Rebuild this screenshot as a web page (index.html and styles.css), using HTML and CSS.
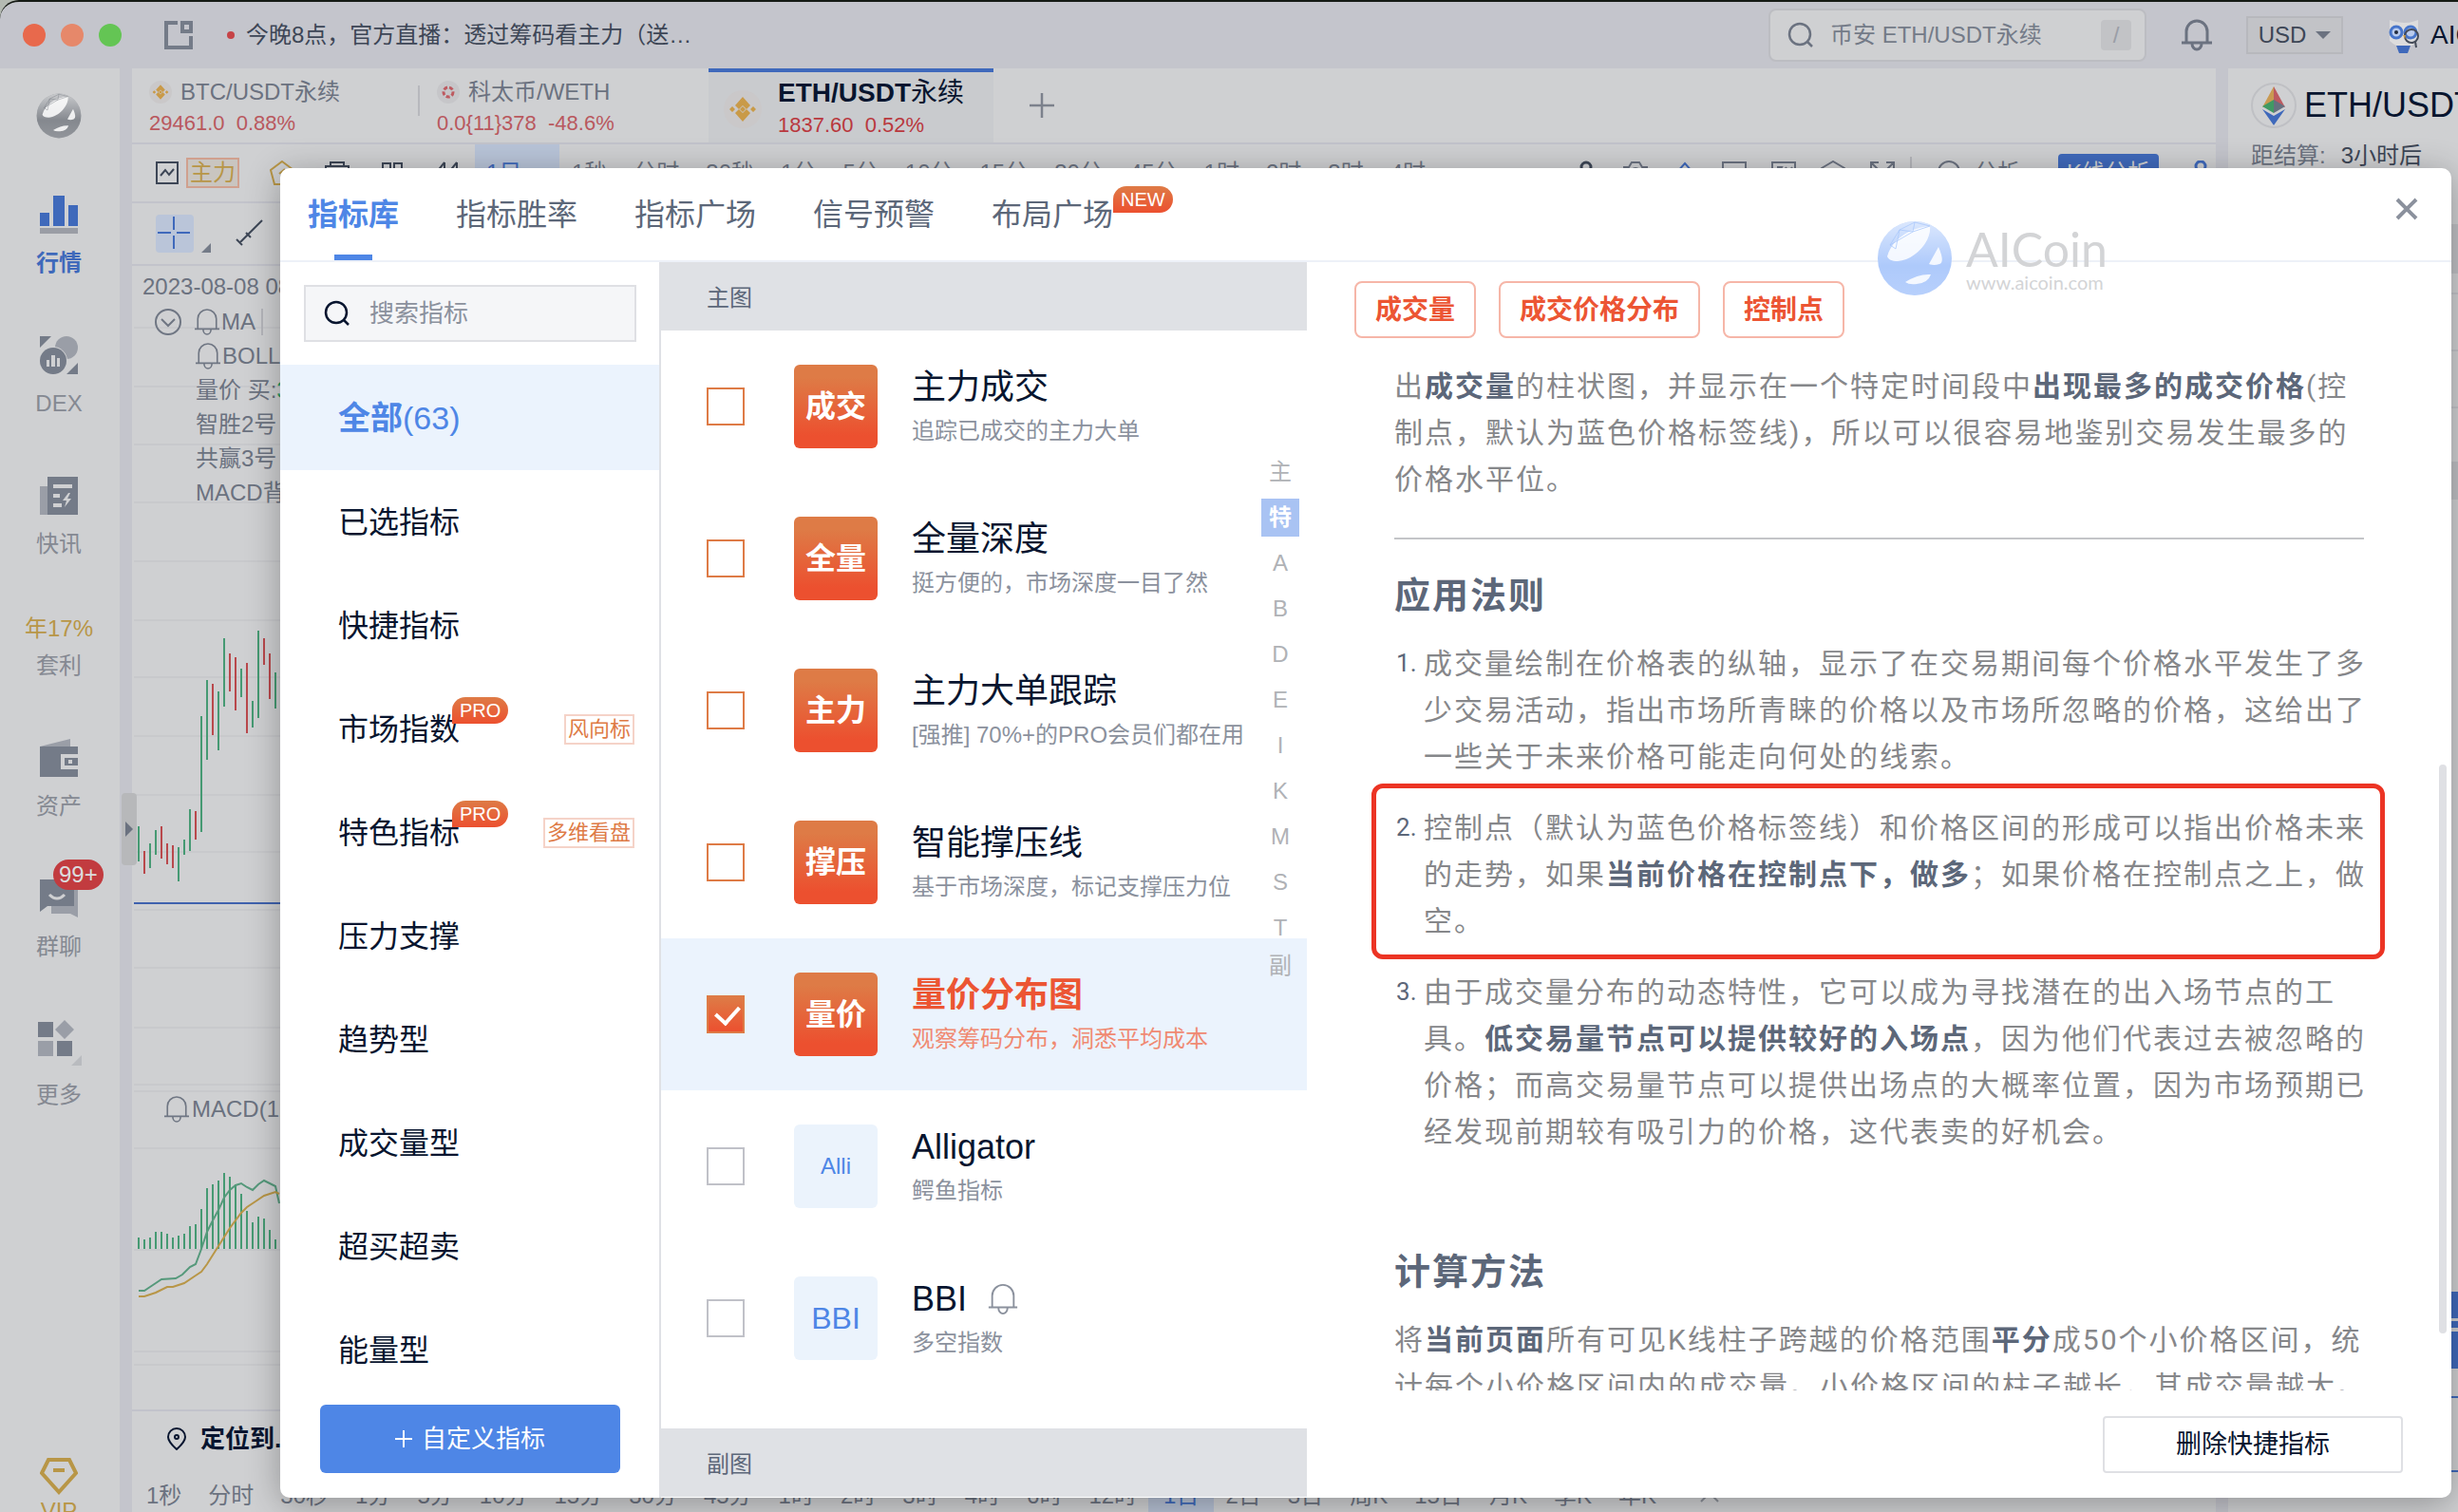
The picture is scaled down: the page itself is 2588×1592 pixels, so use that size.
FILE: index.html
```html
<!DOCTYPE html>
<html lang="zh-CN">
<head>
<meta charset="utf-8">
<title>AICoin 指标库</title>
<link rel="stylesheet" href="styles.css">
</head>
<body>
<svg class="defs" aria-hidden="true">
  <symbol id="bell" viewBox="0 0 32 36"><path d="M5 25V14a11 11 0 0 1 22 0v11M0 26h32M11 27a5 6 0 0 0 10 0" fill="none" stroke="currentColor" stroke-width="3"/></symbol>
  <symbol id="bell-thin" viewBox="0 0 32 36"><path d="M4 26V14a12 12 0 0 1 24 0v12M0 27h32M11 28a5 6 0 0 0 10 0" fill="none" stroke="currentColor" stroke-width="2"/></symbol>
  <symbol id="search" viewBox="0 0 28 28"><path d="M13 2a11 11 0 1 0 0 22a11 11 0 1 0 0-22M21 21l5 5" fill="none" stroke="currentColor" stroke-width="2.5"/></symbol>
  <symbol id="binance" viewBox="0 0 40 40"><circle cx="20" cy="20" r="20" fill="#cac8c9"/><path d="M12 16l8-9 8 9-4 4-4-4-4 4zM12 24l8 9 8-9-4-4-4 4-4-4zM20 17l3 3-3 3-3-3zM9 17l3 3-3 3-3-3zM31 17l3 3-3 3-3-3z" fill="#c99a48"/></symbol>
  <symbol id="globe" viewBox="0 0 80 80"><circle cx="40" cy="40" r="39" fill="currentColor"/><circle cx="40" cy="40" r="39" fill="url(#globe-light)"/><path d="M11 38C16 20 34 8 56 6C58 22 40 42 22 43C16 43 12 41 11 38zM55 46L65 28Q72 44 66 46Q60 48 55 46zM30 65Q44 56 57 57Q54 66 42 67Q34 68 30 65z" fill="#fff" fill-opacity=".85"/><path d="M14 26L24 10L40 2L56 6M24 10L38 12L40 2M38 12L56 6M14 26L38 12M14 26L20 30L24 10" fill="none" stroke="currentColor" stroke-opacity=".7" stroke-width="1"/></symbol>
  <linearGradient id="globe-light" x1="0" y1="0" x2="0" y2="1"><stop offset="0" stop-color="#fff" stop-opacity=".6"/><stop offset=".6" stop-color="#fff" stop-opacity=".1"/><stop offset="1" stop-color="#fff" stop-opacity=".2"/></linearGradient>
</svg>

<div class="window">
  <header class="titlebar">
    <div class="lights"><i class="light light-red"></i><i class="light light-orange"></i><i class="light light-green"></i></div>
    <svg class="layout-icon" viewBox="0 0 30 30"><path d="M14 2H2v26h26V16M19 2h9v9h-9z" fill="none" stroke="#747b88" stroke-width="4"/></svg>
    <a class="notice" href="#"><i class="dot"></i>今晚8点，官方直播：透过筹码看主力（送…</a>
    <label class="top-search"><svg class="icon28"><use href="#search"/></svg><input type="text" placeholder="币安 ETH/USDT永续" aria-label="搜索"><kbd>/</kbd></label>
    <svg class="top-bell"><use href="#bell"/></svg>
    <button class="currency">USD<i class="caret"></i></button>
    <a class="profile" href="#"><svg class="owl" viewBox="0 0 38 40"><path d="M4 4q15 6 30 0v22q-15 14-30 0z" fill="#dcdcdd"/><circle cx="11" cy="17" r="6" fill="#b9cbed" stroke="#4675cb" stroke-width="3"/><circle cx="26" cy="17" r="6" fill="#b9cbed" stroke="#4675cb" stroke-width="3"/><circle cx="11" cy="17" r="2" fill="#222b3d"/><circle cx="27" cy="21" r="7" fill="none" stroke="#454c59" stroke-width="2"/><path d="M11 31h15l-3 8h-9z" fill="#3f69bb"/><path d="M31 27l1 6" stroke="#454c59" stroke-width="2"/><path d="M18 20l3 0-1 4z" fill="#c99a48"/></svg>AIC</a>
  </header>

  <div class="workspace">
    <nav class="sidebar">
      <svg class="brand"><use href="#globe"/></svg>
      <a class="nav-item nav-active" href="#"><svg class="icon40" viewBox="0 0 40 40"><path d="M0 18h10v14H0zM14 0h12v32H14zM30 10h10v22H30z" fill="#3f69bb"/><path d="M0 34h40v6H0z" fill="#9a9da5"/></svg>行情</a>
      <a class="nav-item" href="#"><svg class="icon40" viewBox="0 0 40 40"><circle cx="28" cy="12" r="12" fill="#9a9ea7"/><circle cx="14" cy="26" r="15" fill="#cfd0d2"/><circle cx="14" cy="26" r="14" fill="#747b88"/><path d="M0 0h12L0 12zM40 40H28l12-12z" fill="#747b88"/><path d="M7 25h3v7H7zM12 20h4v12h-4zM18 23h3v9h-3z" fill="#cfd0d2"/></svg>DEX</a>
      <a class="nav-item" href="#"><svg class="icon40" viewBox="0 0 40 40"><path d="M0 10h8v30H0z" fill="#9a9ea7"/><path d="M8 0h32v40H8z" fill="#747b88"/><path d="M14 8h20v4H14zM14 18h7v4h-7zM14 28h9v4h-9zM30 17l-6 8h4l-2 7 7-9h-4l3-6z" fill="#cfd0d2"/></svg>快讯</a>
      <a class="nav-item nav-rate" href="#"><b>年17%</b>套利</a>
      <a class="nav-item" href="#"><svg class="icon40" viewBox="0 0 40 40"><path d="M0 8L32 0v8z" fill="#9a9ea7"/><path d="M0 8h40v8H22v16h18v8H0z" fill="#747b88"/><path d="M26 20h14v8H26z" fill="#747b88"/><path d="M30 22h4v4h-4z" fill="#cfd0d2"/></svg>资产</a>
      <a class="nav-item" href="#"><svg class="icon40" viewBox="0 0 40 40"><path d="M12 8h28v32l-8-4H12z" fill="#9a9ea7"/><path d="M0 0h36v28H8l-8 6z" fill="#747b88"/><path d="M10 16q8 8 16 0" fill="none" stroke="#cfd0d2" stroke-width="3"/></svg>群聊<span class="count">99+</span></a>
      <a class="nav-item" href="#"><svg class="icon-more" viewBox="0 0 48 48"><path d="M2 2h16v16H2zM22 22h16v16H22z" fill="#747b88"/><path d="M2 22h16v16H2zM30 0l10 10-10 10-10-10z" fill="#9a9ea7"/><path d="M48 37v11H37z" fill="#b9bbbf"/></svg>更多</a>
      <a class="vip" href="#"><svg class="icon40" viewBox="0 0 40 40"><path d="M9 3h22l7 14-18 20L2 17z" fill="none" stroke="#b89647" stroke-width="4"/><path d="M14 14h12" stroke="#b89647" stroke-width="4"/></svg>VIP</a>
    </nav>

    <main class="center">
      <div class="pair-tabs">
        <a class="pair" href="#"><span class="pair-name"><svg class="icon24"><use href="#binance"/></svg>BTC/USDT永续</span><span class="price">29461.0&nbsp; 0.88%</span></a>
        <i class="pair-line"></i>
        <a class="pair" href="#"><span class="pair-name"><svg class="icon24" viewBox="0 0 24 24"><circle cx="12" cy="12" r="12" fill="#c6c6c9"/><circle cx="12" cy="12" r="5" fill="none" stroke="#bd5a60" stroke-width="3" stroke-dasharray="4 2"/></svg>科太币/WETH</span><span class="price">0.0{11}378&nbsp; -48.6%</span></a>
        <a class="pair-current" href="#"><svg class="icon40"><use href="#binance"/></svg><span><b>ETH/USDT<span class="suffix">永续</span></b><span class="price">1837.60&nbsp; 0.52%</span></span></a>
        <button class="add" aria-label="添加"><svg viewBox="0 0 26 26"><path d="M13 0v26M0 13h26" stroke="#7c818c" stroke-width="2.5"/></svg></button>
      </div>

      <div class="toolbar">
        <svg class="tool-chart" viewBox="0 0 24 24"><path d="M1 1h22v22H1zM5 15l5-6 4 5 5-6" fill="none" stroke="#3d4656" stroke-width="2"/></svg>
        <button class="main-force">主力</button>
        <div class="tool-group">
          <svg class="tool" viewBox="0 0 26 26"><path d="M13 1l12 9-4 15H5L1 10zM10 14l6-5" fill="none" stroke="#b89647" stroke-width="2"/></svg>
          <svg class="tool" viewBox="0 0 26 26"><path d="M6 6V2h14v4M1 6h24v18H1z" fill="none" stroke="#3d4656" stroke-width="2"/></svg>
          <svg class="tool" viewBox="0 0 26 26"><path d="M3 3h8v8H3zM15 3h8v8h-8zM3 15h8v8H3zM15 15h8v8h-8z" fill="none" stroke="#3d4656" stroke-width="2"/></svg>
          <svg class="tool" viewBox="0 0 26 26"><path d="M10 2v20M10 2L1 13h12M23 2v20M23 2l-9 11h12" fill="none" stroke="#3d4656" stroke-width="2"/></svg>
        </div>
        <button class="period-now">1日</button>
        <div class="periods"><span>1秒</span><span>分时</span><span>30秒</span><span>1分</span><span>5分</span><span>10分</span><span>15分</span><span>30分</span><span>45分</span><span>1时</span><span>2时</span><span>3时</span><span>4时</span></div>
        <div class="tool-right">
          <svg class="tool" viewBox="0 0 26 26"><circle cx="13" cy="7" r="5" fill="none" stroke="#3d4656" stroke-width="3"/></svg>
          <svg class="tool" viewBox="0 0 26 26"><path d="M0 7h6l3-5h8l3 5h6v16H0z" fill="none" stroke="#6b7280" stroke-width="2"/><circle cx="13" cy="13" r="5" fill="none" stroke="#6b7280" stroke-width="2"/></svg>
          <svg class="tool" viewBox="0 0 26 26"><path d="M13 3l9 10-9 10-9-10z" fill="none" stroke="#3f69bb" stroke-width="2"/></svg>
          <svg class="tool" viewBox="0 0 26 26"><path d="M1 2h24v20H1z" fill="none" stroke="#6b7280" stroke-width="2"/></svg>
          <svg class="tool" viewBox="0 0 26 26"><path d="M1 2h24v20H1zM6 7h5l-3 6M15 7l3 5 4-5" fill="none" stroke="#6b7280" stroke-width="2"/></svg>
          <svg class="tool" viewBox="0 0 26 26"><path d="M1 8l12-7 12 7v11l-12 6-12-6z" fill="none" stroke="#6b7280" stroke-width="2"/></svg>
          <svg class="tool" viewBox="0 0 26 26"><path d="M1 9V2h8M17 2h8v7M1 2l9 9M25 2l-9 9" fill="none" stroke="#6b7280" stroke-width="2"/></svg>
          <i class="bar"></i>
          <svg class="tool" viewBox="0 0 26 26"><circle cx="13" cy="12" r="11" fill="none" stroke="#6b7280" stroke-width="2"/></svg>
          <span class="analyse">分析</span>
          <button class="k-analyse">K线分析</button>
          <svg class="tool" viewBox="0 0 26 26"><circle cx="18" cy="6" r="5" fill="none" stroke="#3f69bb" stroke-width="3"/><path d="M14 10l-9 9" stroke="#3f69bb" stroke-width="3"/></svg>
        </div>
      </div>

      <div class="draw-tools">
        <button class="cross" aria-label="十字光标"><svg viewBox="0 0 40 40"><path d="M19 2v14M19 22v14M2 19h14M22 19h14" stroke="#3f69bb" stroke-width="2"/></svg></button>
        <svg class="corner" viewBox="0 0 10 10"><path d="M10 0v10H0z" fill="#747b88"/></svg>
        <svg class="trend" viewBox="0 0 30 30"><path d="M4 25L28 1M1 21l6 6M11 14l5 5" fill="none" stroke="#3d4656" stroke-width="2"/></svg>
      </div>

      <div class="chart">
        <svg class="plot" viewBox="140 280 160 1204">
          <path d="M142 345h158M142 407h158M142 468h158M142 529h158M142 591h158M142 653h158M142 713h158M142 775h158M142 837h158M142 897h158M142 958h158M142 1019h158M142 1082h158M142 1142h158M142 1149h158M142 1209h158M142 1316h158M142 1423h158M142 1437h158" stroke="#c8c9cc" stroke-width="2"/>
          <path d="M147 870v37M159 888v26M165 874v26M189 892v36M195 884v16M201 852v44M213 754v122M219 716v84M231 728v62M237 672v72M255 704v30M267 738v28M273 664v92M291 708v38" stroke="#469a73" stroke-width="2"/>
          <path d="M153 896v24M171 870v34M177 888v22M183 890v24M207 854v30M225 720v54M243 688v40M249 692v56M261 698v74M279 672v28M285 688v48" stroke="#b9484c" stroke-width="2"/>
          <path d="M142 951h158" stroke="#3f62ae" stroke-width="2"/>
          <path d="M147 1315v-12M153 1315v-10M159 1315v-12M165 1315v-18M171 1315v-18M177 1315v-16M183 1315v-12M189 1315v-14M195 1315v-16M201 1315v-24M207 1315v-26M213 1315v-42M219 1315v-64M225 1315v-68M231 1315v-72M237 1315v-80M243 1315v-76M249 1315v-68M255 1315v-58M261 1315v-40M267 1315v-28M273 1315v-34M279 1315v-32M285 1315v-20M291 1315v-10" stroke="#469a73" stroke-width="2"/>
          <path d="M147 1359h6l6-4 6-4 6-4 15-1 7-4 8-8 6-3 6-16 6-18 6-12 6-11 6-13 6-8 6-5 6-2 6 4 6 3 6-6 6-4 6 3 6 3 4 18" fill="none" stroke="#55997b" stroke-width="2"/>
          <path d="M147 1365h6l12-4 12-6h6l12-4 12-8 6-4 6-8 12-19 12-19 12-16 6-6 9-6 9-6 12-4 4 2" fill="none" stroke="#b89647" stroke-width="2"/>
        </svg>
        <div class="legend">
          <time>2023-08-08 08:00</time>
          <div class="legend-row legend-first"><svg class="icon28" viewBox="0 0 28 28"><circle cx="14" cy="14" r="13" fill="none" stroke="#6f7683" stroke-width="2"/><path d="M7 11l7 7 7-7" fill="none" stroke="#6f7683" stroke-width="2"/></svg><svg class="small-bell"><use href="#bell-thin"/></svg>MA<i class="legend-line"></i></div>
          <div class="legend-row"><svg class="small-bell"><use href="#bell-thin"/></svg>BOLL</div>
          <div class="legend-row legend-value"><span>量价 买:</span><span class="up">3</span></div>
          <div class="legend-row">智胜2号</div>
          <div class="legend-row">共赢3号</div>
          <div class="legend-row">MACD背离</div>
        </div>
        <div class="macd-label"><svg class="small-bell"><use href="#bell-thin"/></svg>MACD(12,26,9)</div>
        <button class="drawer" aria-label="展开"><svg viewBox="0 0 8 16"><path d="M0 0l8 8-8 8z" fill="#6b7280"/></svg></button>
      </div>

      <div class="locate"><svg class="pin" viewBox="0 0 20 24"><path d="M10 1a9 9 0 0 1 9 9q0 5-9 13Q1 15 1 10a9 9 0 0 1 9-9z" fill="none" stroke="#08152f" stroke-width="2"/><circle cx="10" cy="10" r="2" fill="none" stroke="#08152f" stroke-width="2"/></svg>定位到...</div>
      <div class="periods periods-bottom"><span>1秒</span><span>分时</span><span>30秒</span><span>1分</span><span>5分</span><span>10分</span><span>15分</span><span>30分</span><span>45分</span><span>1时</span><span>2时</span><span>3时</span><span>4时</span><span>6时</span><span>12时</span><span class="chosen">1日</span><span>2日</span><span>3日</span><span>周K</span><span>15日</span><span>月K</span><span>季K</span><span>年K</span><svg class="fold" viewBox="0 0 20 12"><path d="M1 11l9-9 9 9" fill="none" stroke="#8a8e97" stroke-width="2"/></svg></div>
    </main>

    <aside class="quote">
      <h1><svg class="icon48" viewBox="0 0 48 48"><circle cx="24" cy="24" r="23" fill="none" stroke="#bfc0c4" stroke-width="2"/><path d="M24 4v16L12 26z" fill="#c99a52"/><path d="M24 4v16l12 6z" fill="#bd5a60"/><path d="M24 18v14l-12-7z" fill="#3f9a63"/><path d="M24 18v14l12-7z" fill="#66707f"/><path d="M12 28l12 7 12-7-12 17z" fill="#3f69bb"/></svg>ETH/USDT</h1>
      <p class="settle">距结算:<span>3小时后</span></p>
      <svg class="quote-edge" viewBox="0 0 8 1400"><path d="M0 59h8v52H0zM0 309h8v40H0z" fill="#bfc0c4"/><path d="M0 132h8M0 192h8M0 252h8" stroke="#c2c3c8" stroke-width="2"/><path d="M0 1183h8v28H0zM0 1214h8v7H0zM0 1225h8v39H0z" fill="#3f69bb"/><path d="M0 1294h8M0 1372h8" stroke="#3f69bb" stroke-width="2"/></svg>
    </aside>
  </div>
</div>

<section class="dialog" role="dialog" aria-label="指标库">
  <header class="dialog-head">
    <button class="tab tab-on">指标库</button>
    <button class="tab">指标胜率</button>
    <button class="tab">指标广场</button>
    <button class="tab">信号预警</button>
    <button class="tab">布局广场<span class="badge badge-new">NEW</span></button>
    <button class="close" aria-label="关闭"><svg viewBox="0 0 24 24"><path d="M2 2l20 20M22 2L2 22" stroke="#8b919d" stroke-width="4"/></svg></button>
  </header>

  <div class="dialog-body">
    <div class="categories">
      <label class="find"><svg class="icon28"><use href="#search"/></svg><input type="text" placeholder="搜索指标" aria-label="搜索指标"></label>
      <ul class="category-list">
        <li class="on"><a href="#"><b>全部</b>(63)</a></li>
        <li><a href="#">已选指标</a></li>
        <li><a href="#">快捷指标</a></li>
        <li><a href="#">市场指数<span class="badge">PRO</span></a><em>风向标</em></li>
        <li><a href="#">特色指标<span class="badge">PRO</span></a><em>多维看盘</em></li>
        <li><a href="#">压力支撑</a></li>
        <li><a href="#">趋势型</a></li>
        <li><a href="#">成交量型</a></li>
        <li><a href="#">超买超卖</a></li>
        <li><a href="#">能量型</a></li>
      </ul>
      <button class="custom"><svg class="plus" viewBox="0 0 18 18"><path d="M9 0v18M0 9h18" stroke="#fff" stroke-width="2"/></svg>自定义指标</button>
    </div>

    <div class="indicators">
      <h2 class="group">主图</h2>
      <ul class="indicator-list">
        <li><label><input type="checkbox"><span class="tile">成交</span><span class="info"><strong>主力成交</strong><small>追踪已成交的主力大单</small></span></label></li>
        <li><label><input type="checkbox"><span class="tile">全量</span><span class="info"><strong>全量深度</strong><small>挺方便的，市场深度一目了然</small></span></label></li>
        <li><label><input type="checkbox"><span class="tile">主力</span><span class="info"><strong>主力大单跟踪</strong><small>[强推] 70%+的PRO会员们都在用</small></span></label></li>
        <li><label><input type="checkbox"><span class="tile">撑压</span><span class="info"><strong>智能撑压线</strong><small>基于市场深度，标记支撑压力位</small></span></label></li>
        <li class="picked"><label><input type="checkbox" checked><span class="tile">量价</span><span class="info"><strong>量价分布图</strong><small>观察筹码分布，洞悉平均成本</small></span></label></li>
        <li class="plain"><label><input type="checkbox"><span class="tile tile-small">Alli</span><span class="info"><strong>Alligator</strong><small>鳄鱼指标</small></span></label></li>
        <li class="plain"><label><input type="checkbox"><span class="tile">BBI</span><span class="info"><strong>BBI<svg class="alert"><use href="#bell-thin"/></svg></strong><small>多空指数</small></span></label></li>
      </ul>
      <h2 class="group">副图</h2>
      <nav class="letters"><a href="#">主</a><a class="here" href="#">特</a><a href="#">A</a><a href="#">B</a><a href="#">D</a><a href="#">E</a><a href="#">I</a><a href="#">K</a><a href="#">M</a><a href="#">S</a><a href="#">T</a><a class="last" href="#">副</a></nav>
    </div>

    <div class="detail">
      <div class="tags"><span>成交量</span><span>成交价格分布</span><span>控制点</span></div>
      <article class="article">
        <p>出<b>成交量</b>的柱状图，并显示在一个特定时间段中<b>出现最多的成交价格</b>(控制点，默认为蓝色价格标签线)，所以可以很容易地鉴别交易发生最多的价格水平位。</p>
        <hr>
        <h3>应用法则</h3>
        <ol>
          <li>成交量绘制在价格表的纵轴，显示了在交易期间每个价格水平发生了多少交易活动，指出市场所青睐的价格以及市场所忽略的价格，这给出了一些关于未来价格可能走向何处的线索。</li>
          <li class="marked">控制点（默认为蓝色价格标签线）和价格区间的形成可以指出价格未来的走势，如果<b>当前价格在控制点下，做多</b>；如果价格在控制点之上，做空。</li>
          <li>由于成交量分布的动态特性，它可以成为寻找潜在的出入场节点的工具。<b>低交易量节点可以提供较好的入场点</b>，因为他们代表过去被忽略的价格；而高交易量节点可以提供出场点的大概率位置，因为市场预期已经发现前期较有吸引力的价格，这代表卖的好机会。</li>
        </ol>
        <h3 class="method">计算方法</h3>
        <p>将<b>当前页面</b>所有可见K线柱子跨越的价格范围<b>平分</b>成50个小价格区间，统计每个小价格区间内的成交量。小价格区间的柱子越长，其成交量越大。</p>
      </article>
      <i class="thumb"></i>
      <footer class="actions"><button>删除快捷指标</button></footer>
    </div>
  </div>

  <div class="watermark"><svg class="watermark-globe"><use href="#globe"/></svg><div><b>AICoin</b><span>www.aicoin.com</span></div></div>
</section>
</body>
</html>
```
FILE: styles.css
```css
* { box-sizing: border-box; }
html { background: #b4bab2; }
body {
  margin: 0;
  height: 100vh;
  overflow: hidden;
  position: relative;
  font-family: "Liberation Sans", "Noto Sans CJK SC", sans-serif;
  font-size: 24px;
  line-height: 34px;
  color: #6b7280;
  white-space: nowrap;
}
a { color: inherit; text-decoration: none; }
button, input { font: inherit; color: inherit; border: 0; padding: 0; background: none; }
ul, ol { margin: 0; padding: 0; list-style: none; }
h1, h2, h3, p { margin: 0; }
svg { display: block; flex: none; }
.defs { position: absolute; width: 0; height: 0; }
.icon24 { width: 24px; height: 24px; }
.icon28 { width: 28px; height: 28px; }
.icon40 { width: 40px; height: 40px; }
.icon48 { width: 48px; height: 48px; }

/* window frame */
.window {
  height: 100%;
  display: flex;
  flex-direction: column;
  border-top: 2px solid #151a14;
  border-radius: 20px 0 0 0;
  background: #c4c5cc;
  overflow: hidden;
}
.titlebar { height: 70px; flex: none; display: flex; align-items: center; padding-left: 24px; }
.lights { display: flex; gap: 16px; }
.light { width: 24px; height: 24px; border-radius: 50%; }
.light-red { background: #e8694c; }
.light-orange { background: #e6886a; }
.light-green { background: #64c554; }
.layout-icon { width: 30px; height: 30px; margin-left: 45px; }
.notice { display: flex; align-items: center; margin-left: 36px; color: #3d4656; }
.dot { width: 8px; height: 8px; border-radius: 50%; background: #c64347; margin-right: 12px; }
.top-search {
  margin-left: auto;
  width: 398px;
  height: 56px;
  padding: 0 14px 0 18px;
  display: flex;
  align-items: center;
  border: 2px solid #bcbdc2;
  border-radius: 8px;
  background: #cfd0d2;
}
.top-search input { flex: 1; min-width: 0; margin-left: 17px; }
.top-search input::placeholder { color: #747b88; opacity: 1; }
kbd { width: 32px; height: 32px; border-radius: 4px; background: #c2c3c6; text-align: center; font: inherit; line-height: 32px; color: #9a9ea7; }
.top-bell { width: 32px; height: 36px; margin-left: 37px; color: #6b7280; }
.currency { width: 102px; height: 40px; margin-left: 36px; display: flex; align-items: center; justify-content: center; gap: 10px; background: #c2c3c7; border: 2px solid #b7b8bd; color: #3d4656; }
.caret { border: 8px solid transparent; border-top-color: #6b7280; border-bottom: 0; }
.profile { width: 121px; padding-left: 45px; display: flex; align-items: center; gap: 9px; overflow: hidden; font-size: 28px; color: #08152f; }
.owl { width: 38px; height: 40px; }

.workspace { flex: 1; min-height: 0; display: grid; grid-template-columns: 126px minmax(0, 1fr) 242px; column-gap: 13px; }

/* left navigation */
.sidebar { display: flex; flex-direction: column; align-items: center; gap: 60px; padding: 26px 2px 0 0; background: #cfd0d2; min-height: 0; }
.brand { width: 48px; height: 48px; color: #777b82; }
.nav-item { position: relative; display: flex; flex-direction: column; align-items: center; gap: 14px; color: #858992; }
.nav-active { font-weight: 700; color: #3f69bb; }
.nav-rate { gap: 10px; }
.nav-rate b { font-weight: 400; line-height: 24px; color: #b89647; }
.icon-more { width: 48px; height: 48px; }
.count { position: absolute; left: 18px; top: -21px; padding: 0 6px; border-radius: 16px; background: #c23b3f; color: #dcdcdd; line-height: 32px; }
.vip { margin-top: auto; margin-bottom: -16px; display: flex; flex-direction: column; align-items: center; color: #b89647; }

/* chart column */
.center { background: #cfd0d2; display: flex; flex-direction: column; min-height: 0; }
.pair-tabs { height: 80px; flex: none; display: flex; border-bottom: 2px solid #c2c3cb; }
.pair { width: 302px; padding: 8px 0 0 18px; line-height: 33px; }
.pair-line { width: 2px; height: 32px; margin: 18px 0 0 -1px; background: #b7b8bd; }
.pair-name { display: flex; align-items: center; gap: 9px; }
.price { display: block; font-size: 22px; color: #b9585e; }
.pair-current { width: 300px; height: 78px; margin-left: 2px; padding: 4px 16px 0; display: flex; align-items: center; gap: 17px; border-top: 4px solid #3f69bb; background: #c9cbce; }
.pair-current b { display: block; font-size: 28px; font-weight: 700; color: #08152f; }
.suffix { font-weight: 400; }
.pair-current .price { color: #b9383e; }
.add { margin-left: 38px; }
.add svg { width: 26px; height: 26px; }
.toolbar { height: 62px; flex: none; padding: 0 8px 0 25px; display: flex; align-items: center; border-bottom: 2px solid #c2c3cb; }
.tool { width: 26px; height: 26px; }
.tool-chart { width: 24px; height: 24px; }
.main-force { width: 56px; height: 32px; margin-left: 8px; border: 2px solid #d0a08e; background: #c9c5c0; line-height: 28px; color: #b89647; }
.tool-group { display: flex; gap: 32px; margin: 0 16px 0 32px; }
.period-now { width: 89px; align-self: stretch; padding-left: 12px; text-align: left; background: #b8c4d8; color: #3f69bb; }
.periods { display: flex; gap: 28px; margin-left: 13px; }
.tool-right { margin-left: auto; display: flex; align-items: center; gap: 26px; }
.bar { width: 2px; height: 34px; margin-left: -10px; background: #b4b5ba; }
.analyse { width: 62px; margin-left: -12px; }
.k-analyse { width: 106px; height: 40px; border-radius: 4px; background: #3f69bb; color: #cfd0d2; }
.draw-tools { height: 66px; flex: none; padding: 0 25px; display: flex; align-items: center; border-bottom: 2px solid #c2c3cb; }
.cross { width: 40px; height: 40px; border-radius: 4px; background: #bac5d9; }
.corner { width: 10px; height: 10px; margin: 30px 0 0 8px; }
.trend { width: 30px; height: 30px; margin-left: 26px; }
.chart { position: relative; flex: 1; min-height: 0; }
.plot { width: 160px; height: 100%; }
.legend { position: absolute; left: 11px; top: 5px; }
.legend time { display: block; }
.legend-row { height: 36px; line-height: 36px; padding-left: 56px; display: flex; align-items: center; gap: 2px; }
.legend-first { padding-left: 13px; margin-top: 2px; }
.legend-first .icon28 { margin-right: 12px; }
.legend-line { width: 2px; height: 28px; margin-left: 4px; background: #b4b5ba; }
.legend-value { gap: 0; }
.up { color: #2f9a66; }
.small-bell { width: 26px; height: 30px; color: #6f7683; }
.macd-label { position: absolute; left: 34px; top: 871px; display: flex; align-items: center; gap: 3px; }
.drawer { position: absolute; left: -11px; top: 555px; width: 16px; height: 76px; border-radius: 4px; background: #b7b8ba; display: flex; align-items: center; justify-content: center; }
.drawer svg { width: 8px; height: 16px; }
.locate { height: 60px; flex: none; padding-left: 37px; display: flex; align-items: center; gap: 15px; border-top: 2px solid #c2c3cb; font-size: 26px; font-weight: 700; color: #08152f; }
.pin { width: 20px; height: 24px; }
.periods-bottom { height: 48px; flex: none; margin-left: 15px; padding-top: 14px; }
.chosen { margin: -14px -16px 0; padding: 14px 16px 0; background: #b4bfd2; color: #3f69bb; }
.fold { width: 20px; height: 12px; margin: 12px 0 0 18px; }

/* quote column */
.quote { position: relative; background: #cfd0d2; padding: 15px 0 0 24px; overflow: hidden; }
.quote h1 { display: flex; align-items: center; gap: 8px; font-size: 36px; line-height: 48px; font-weight: 400; color: #08152f; }
.settle { margin-top: 12px; }
.settle span { margin-left: 16px; color: #3d4656; }
.quote-edge { position: absolute; right: 0; top: 105px; width: 8px; height: 1400px; }

/* dialog */
.dialog {
  position: absolute;
  inset: 177px 7px 15px 295px;
  display: flex;
  flex-direction: column;
  border-radius: 10px;
  background: #fff;
  box-shadow: 0 6px 36px rgba(0, 0, 0, 0.3);
}
.dialog-head { position: relative; height: 99px; flex: none; display: flex; gap: 60px; padding: 0 35px 0 29px; border-bottom: 2px solid #edf1f8; }
.tab { position: relative; font-size: 32px; color: #5c6779; }
.tab-on { font-weight: 700; color: #4e86e6; }
.tab-on::after { content: ""; position: absolute; left: 28px; bottom: 0; width: 40px; height: 6px; background: #4e86e6; }
.badge { position: absolute; left: 100%; height: 28px; padding: 0 8px; border-radius: 14px 14px 14px 0; background: linear-gradient(#de7b46, #ec502f); color: #fff; font-size: 20px; line-height: 28px; font-weight: 400; }
.badge-new { top: 19px; }
.close { margin: -12px 0 0 auto; }
.close svg { width: 24px; height: 24px; }
.dialog-body { flex: 1; min-height: 0; display: grid; grid-template-columns: 401px 680px minmax(0, 1fr); }

.categories { display: flex; flex-direction: column; padding-top: 24px; border-right: 2px solid #dfe1e5; min-height: 0; }
.find { height: 60px; flex: none; margin: 0 24px 24px 25px; padding: 0 19px; display: flex; align-items: center; gap: 20px; border: 2px solid #dfe0e4; background: #f5f6f8; color: #08152f; }
.find input { flex: 1; min-width: 0; font-size: 26px; }
.find input::placeholder { color: #8b919d; opacity: 1; }
.category-list { flex: 1; min-height: 0; overflow: hidden; }
.category-list li { height: 109px; padding: 0 26px 0 61px; display: flex; align-items: center; justify-content: space-between; font-size: 32px; line-height: 48px; color: #08152f; }
.category-list .on { height: 111px; background: #ebf3fd; font-size: 34px; color: #4e86e6; }
.category-list a { position: relative; }
.category-list .badge { top: -10px; margin-left: -8px; }
.category-list em { padding: 0 2px; border: 2px solid #f5d3c8; font-size: 22px; line-height: 28px; font-style: normal; color: #de7b46; }
.custom { height: 72px; flex: none; margin: 3px 41px 26px 42px; display: flex; align-items: center; justify-content: center; gap: 10px; border-radius: 6px; background: #4e86e6; font-size: 26px; color: #fff; }
.plus { width: 18px; height: 18px; }

.indicators { position: relative; overflow: hidden; }
.group { height: 72px; padding: 3px 48px 0; background: #dfe1e5; font-size: 24px; font-weight: 400; line-height: 69px; color: #5c6779; }
.indicator-list { margin-bottom: 36px; }
.indicator-list label { height: 160px; padding-left: 48px; display: flex; align-items: center; }
.indicator-list input { appearance: none; width: 40px; height: 40px; margin: 0 52px 0 0; border: 2px solid #de7b46; background: #fff; }
.indicator-list input:checked { background: linear-gradient(#de7b46, #ec502f); }
.indicator-list input:checked::after { content: ""; display: block; width: 12px; height: 20px; margin: 4px 0 0 12px; border: solid #fff; border-width: 0 4px 4px 0; transform: rotate(42deg); }
.tile { width: 88px; height: 88px; margin-right: 36px; border-radius: 6px; background: linear-gradient(#de7b46 15%, #ec502f 85%); color: #fff; font-size: 32px; font-weight: 700; line-height: 88px; text-align: center; }
.info strong { display: flex; align-items: center; margin-top: 2px; font-size: 36px; font-weight: 400; line-height: 50px; color: #08152f; }
.info small { display: block; font-size: 24px; line-height: 42px; color: #8b919d; }
.picked { background: #ebf3fd; }
.picked .info strong { font-weight: 700; color: #ec5533; }
.picked .info small { color: #f08a72; }
.plain input { border-color: #c0c1c8; }
.plain .tile { background: #ebf3fc; font-weight: 400; color: #4e86e6; }
.plain .tile-small { font-size: 24px; }
.alert { width: 32px; height: 34px; margin-left: 22px; color: #8b919d; }
.letters { position: absolute; right: 8px; top: 201px; width: 40px; display: flex; flex-direction: column; gap: 8px; text-align: center; line-height: 40px; color: #b0b2b6; }
.letters .here { background: #a9c3f3; font-weight: 700; color: #fff; }
.letters .last { margin-top: -8px; }

.detail { position: relative; display: flex; flex-direction: column; padding: 20px 0 26px; min-height: 0; }
.tags { height: 60px; flex: none; display: flex; gap: 24px; padding-left: 50px; margin-bottom: 26px; }
.tags span { padding: 0 20px; border: 2px solid #f6b6a8; border-radius: 8px; font-size: 28px; font-weight: 700; line-height: 58px; color: #ec5533; }
.article { flex: 1; min-height: 0; overflow: hidden; padding: 0 86px 0 92px; font-family: Roboto, "Noto Sans CJK SC", sans-serif; font-size: 30px; line-height: 49px; letter-spacing: 2px; color: #86878a; white-space: normal; }
.article b { font-weight: 700; color: #5c6779; }
.article hr { margin: 37px 6px 0 0; border: 0; border-top: 2px solid #c4c5c8; }
.article h3 { margin: 32px 0 20px; font-size: 38px; line-height: 54px; font-weight: 700; color: #5c6779; }
.article ol { counter-reset: step; display: grid; gap: 26px; }
.article li { position: relative; padding-left: 31px; counter-increment: step; }
.article li::before { content: counter(step) "."; position: absolute; left: 2px; font-size: 26px; letter-spacing: 0; color: #5c6779; }
.marked::after { content: ""; position: absolute; inset: -22px -16px -16px -24px; border: 5px solid #ec3424; border-radius: 12px; }
.article .method { margin-top: 96px; }
.thumb { position: absolute; right: 5px; top: 529px; width: 8px; height: 599px; border-radius: 4px; background: #dfe0e4; }
.actions { flex: none; height: 87px; padding: 27px 51px 0 0; display: flex; justify-content: flex-end; }
.actions button { width: 316px; height: 60px; border: 2px solid #dfe0e4; border-radius: 4px; font-size: 27px; color: #08152f; }

.watermark { position: absolute; left: 1681px; top: 55px; display: flex; align-items: center; gap: 14px; pointer-events: none; font-family: Lato, sans-serif; color: #d3d4d6; }
.watermark-globe { width: 80px; height: 80px; color: #a5c4fb; }
.watermark b { display: block; margin-top: 4px; font-size: 50px; line-height: 46px; font-weight: 400; }
.watermark span { display: block; font-size: 20px; line-height: 24px; }
```
